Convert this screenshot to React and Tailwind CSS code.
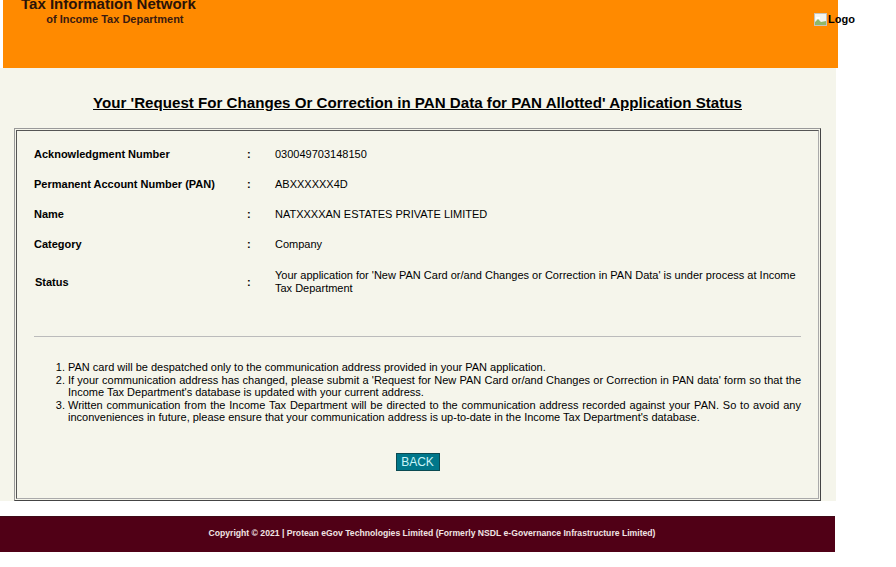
const rows = [
  { label: 'Acknowledgment Number', value: '030049703148150' },
  { label: 'Permanent Account Number (PAN)', value: 'ABXXXXXX4D' },
  { label: 'Name', value: 'NATXXXXAN ESTATES PRIVATE LIMITED' },
  { label: 'Category', value: 'Company' },
];

function App() {
  return (
    <div className="h-[567px] w-[896px] overflow-hidden bg-white font-['Liberation_Sans',Arial,sans-serif] text-black">
      {/* Header */}
      <div className="ml-[3px] flex h-[68px] w-[835px] justify-between bg-[#ff8a00]">
        <div className="ml-[18px] -mt-[5px] text-center font-bold">
          <div className="text-[15px] leading-[17px] text-[#2a1208]">Tax Information Network</div>
          <div className="mt-px pl-[13px] text-[11px] leading-[13px] text-[#3a1a10]">of Income Tax Department</div>
        </div>
        <div className="-mr-[17px] mt-[13px] flex h-[13px] items-center text-[11px] font-bold leading-[13px]">
          <svg width="13" height="13" viewBox="0 0 13 13">
            <rect x="0.5" y="0.5" width="12" height="12" fill="#f4f4f0" stroke="#c4c4c0" />
            <path d="M1 12 L1 9 L4 6 L7 9 L12 8 L12 12 Z" fill="#8fb86a" />
            <path d="M2 4 h4 v2 h-4 z" fill="#ffffff" />
          </svg>
          <span className="ml-px">Logo</span>
        </div>
      </div>

      {/* Content */}
      <div className="flex h-[433px] w-[836px] flex-col bg-[#f5f5eb] pl-[14px] pr-[15px]">
        <h1 className="mt-[26px] h-[34px] text-center text-[15.13px] font-bold leading-[17px] underline">
          Your 'Request For Changes Or Correction in PAN Data for PAN Allotted' Application Status
        </h1>
        <div className="flex h-[373px] w-[807px] flex-col border border-[#999] border-r-[#444] border-b-[#444] p-px">
          <div className="flex flex-1 flex-col border border-[#555] border-r-[#aaa] border-b-[#aaa] px-[17px] pt-[8px] text-[11px]">
            {rows.map((row) => (
              <div key={row.label} className="flex h-[30px] items-center leading-[13px]">
                <div className="w-[213px] font-bold">{row.label}</div>
                <div className="w-[28px] font-bold">:</div>
                <div className="flex-1">{row.value}</div>
              </div>
            ))}
            <div className="flex h-[46px] items-center leading-[13px]">
              <div className="w-[213px] pl-px font-bold">Status</div>
              <div className="w-[28px] font-bold">:</div>
              <div className="flex-1">
                Your application for 'New PAN Card or/and Changes or Correction in PAN Data' is under process at Income Tax Department
              </div>
            </div>
            <hr className="mt-[31px] border-t border-[#bbb]" />
            <ol className="mt-[24px] list-decimal pl-[34px] text-justify leading-[12.5px]">
              <li>PAN card will be despatched only to the communication address provided in your PAN application.</li>
              <li>If your communication address has changed, please submit a 'Request for New PAN Card or/and Changes or Correction in PAN data' form so that the Income Tax Department's database is updated with your current address.</li>
              <li>Written communication from the Income Tax Department will be directed to the communication address recorded against your PAN. So to avoid any inconveniences in future, please ensure that your communication address is up-to-date in the Income Tax Department's database.</li>
            </ol>
            <div className="mt-[29px] flex justify-center">
              <button className="h-[18px] w-[44px] border border-[#0b4a52] bg-[#00778a] text-[12px] leading-none text-[#c8f4f8]">BACK</button>
            </div>
          </div>
        </div>
      </div>

      {/* Footer */}
      <div className="mt-[15px] flex h-[36px] w-[835px] items-center justify-center border-t border-[#3f0a18] bg-[#500016] pb-[3px] pl-[29px] text-[8.65px] font-bold text-[#f0e4e4]">
        Copyright © 2021 | Protean eGov Technologies Limited (Formerly NSDL e-Governance Infrastructure Limited)
      </div>
    </div>
  );
}

export default App;
